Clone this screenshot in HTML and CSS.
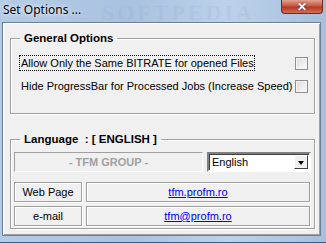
FILE: index.html
```html
<!DOCTYPE html>
<html lang="en">
<head>
    <meta charset="UTF-8">
    <title>Set Options ...</title>
    <link rel="stylesheet" href="styles.css">
</head>
<body>
    <div class="window">
        <div class="titlebar">
            <span class="title">Set Options ...</span>
            <span class="title-mark">SOFTPEDIA</span>
            <button class="close-btn">&#x2715;</button>
        </div>

        <div class="client">
            <fieldset class="group general">
                <legend>General Options</legend>
                <div class="option-row">
                    <span class="option-text focused">Allow Only the Same BITRATE for opened Files</span>
                    <span class="checkbox"></span>
                </div>
                <div class="option-row">
                    <span class="option-text">Hide ProgressBar for Processed Jobs (Increase Speed)</span>
                    <span class="checkbox"></span>
                </div>
            </fieldset>

            <fieldset class="group language">
                <legend>Language&nbsp; : [ ENGLISH ]</legend>
                <div class="lang-row">
                    <div class="group-name">- TFM GROUP -</div>
                    <div class="combo">
                        <span class="combo-value">English</span>
                        <span class="combo-arrow"></span>
                    </div>
                </div>
                <div class="link-row first">
                    <div class="flat-btn">Web Page</div>
                    <div class="link-box"><a href="#">tfm.profm.ro</a></div>
                </div>
                <div class="link-row">
                    <div class="flat-btn">e-mail</div>
                    <div class="link-box"><a href="#">tfm@profm.ro</a></div>
                </div>
            </fieldset>
        </div>
    </div>
</body>
</html>
```

FILE: styles.css
```css
body {
    margin: 0;
    width: 326px;
    height: 243px;
    overflow: hidden;
    font-family: "Liberation Sans", Arial, sans-serif;
    font-size: 11px;
    color: #000;
}
.window {
    width: 326px;
    height: 243px;
    box-sizing: border-box;
    background: linear-gradient(to right, #b4cbe6, #a9c2df 40%, #bcd2ea 70%, #a6bfdc);
    padding: 0 5px 6px 2px;
    display: flex;
    flex-direction: column;
    border-bottom: 1px solid #3d5a82;
}
.titlebar {
    height: 22px;
    display: flex;
    align-items: flex-start;
    position: relative;
}
.title {
    font-family: "Noto Sans", sans-serif;
    font-size: 12px;
    line-height: 14px;
    margin: 3px 0 0 1px;
    color: #000;
    text-shadow: 0 0 6px #e8f0fa, 0 0 3px #e8f0fa;
}
.title-mark {
    position: absolute;
    left: 100px;
    top: 0;
    font-family: "Liberation Serif", serif;
    font-weight: bold;
    font-size: 22px;
    letter-spacing: 3px;
    color: rgba(120, 150, 190, 0.12);
}
.close-btn {
    margin-left: auto;
    margin-right: -2px;
    width: 42px;
    height: 14px;
    border: 1px solid #6b2b22;
    border-top: none;
    border-radius: 0 0 4px 4px;
    background: linear-gradient(to bottom, #e0a192, #c9563f 45%, #b8381f 55%, #d0705a);
    color: #fff;
    font-size: 12px;
    font-weight: bold;
    line-height: 12px;
    padding: 0;
    text-shadow: 0 0 2px #5a1a10;
}
.client {
    flex: 1;
    background: #f0f0f0;
    border: 1px solid #6d7f93;
    box-shadow: inset 1px 1px 0 #fff, inset -1px -1px 0 #a0a0a0;
    padding: 8px 5px 0 7px;
    display: flex;
    flex-direction: column;
}
.group {
    margin: 0;
    border: 1px solid #a0a0a0;
    box-shadow: 1px 1px 0 #fff, inset 1px 1px 0 #fff;
    padding: 0;
}
.group legend {
    font-weight: bold;
    font-size: 11.5px;
    line-height: 15px;
    padding: 0 4px;
}
.general {
    padding: 9px 6px 19px 8px;
}
.general legend {
    margin-left: 1px;
}
.option-row {
    display: flex;
    align-items: center;
    justify-content: space-between;
    height: 16px;
}
.option-row + .option-row {
    margin-top: 7px;
}
.option-text {
    padding: 0 0 0 1px;
    line-height: 14px;
    border: 1px dotted transparent;
}
.option-text.focused {
    border-color: #000;
}
.checkbox {
    width: 11px;
    height: 11px;
    border: 1px solid #8e8f8f;
    background: linear-gradient(135deg, #dcdcdc, #fbfbfb);
    box-shadow: inset 0 0 0 1px #f4f4f4;
}
.language {
    margin-top: 18px;
    padding: 5px 2px 2px 3px;
}
.language legend {
    margin-left: 6px;
}
.lang-row,
.link-row {
    display: flex;
    gap: 4px;
    height: 20px;
}
.link-row.first {
    margin-top: 10px;
}
.link-row + .link-row {
    margin-top: 4px;
}
.group-name {
    width: 189px;
    box-sizing: border-box;
    border: 1px solid #fff;
    border-top-color: #a0a0a0;
    border-left-color: #a0a0a0;
    text-align: center;
    font-weight: bold;
    font-size: 11px;
    line-height: 18px;
    color: #a0a0a0;
}
.combo {
    width: 104px;
    box-sizing: border-box;
    border: 2px solid;
    border-color: #808080 #fff #fff #808080;
    box-shadow: inset 1px 1px 0 #404040;
    background: #fff;
    display: flex;
    align-items: center;
    padding: 0 1px 0 3px;
}
.combo-value {
    flex: 1;
    font-size: 11px;
}
.combo-arrow {
    width: 14px;
    height: 14px;
    box-sizing: border-box;
    background: #f0f0f0;
    border: 1px solid;
    border-color: #fff #404040 #404040 #fff;
    position: relative;
}
.combo-arrow::after {
    content: "";
    position: absolute;
    left: 3px;
    top: 5px;
    border-left: 3px solid transparent;
    border-right: 3px solid transparent;
    border-top: 4px solid #000;
}
.flat-btn,
.link-box {
    box-sizing: border-box;
    border: 1px solid #a0a0a0;
    box-shadow: inset 1px 1px 0 #fff, 1px 1px 0 #fff;
    text-align: center;
    line-height: 18px;
    font-size: 11px;
}
.flat-btn {
    width: 68px;
}
.link-box {
    width: 224px;
}
.link-box a {
    color: #0000ff;
    text-decoration: underline;
}
```
